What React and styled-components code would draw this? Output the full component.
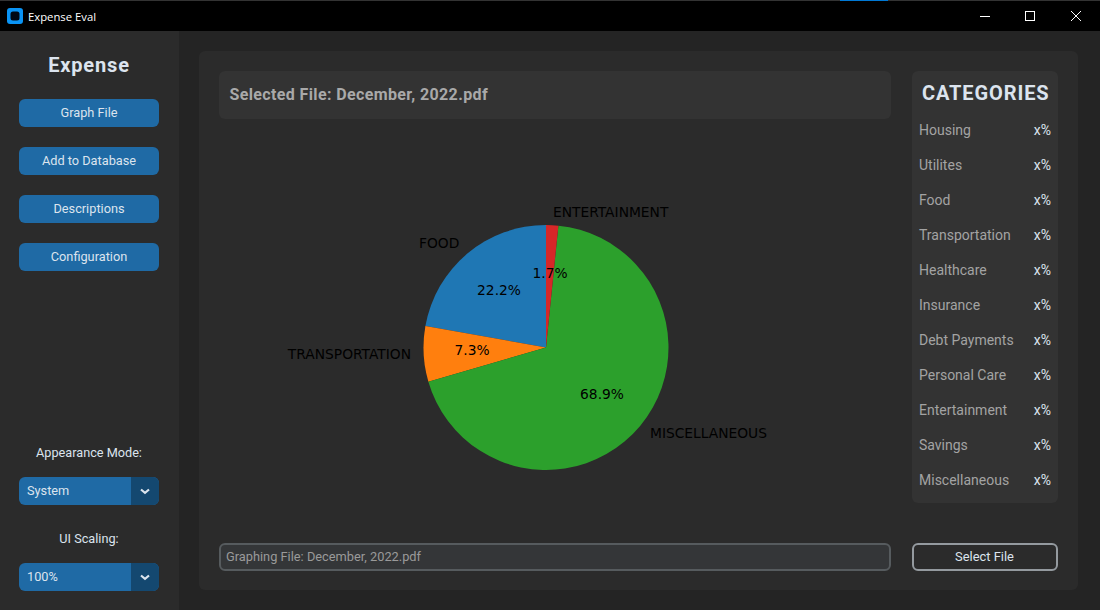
import React from 'react';
import styled, { createGlobalStyle } from 'styled-components';

const GlobalStyle = createGlobalStyle`
  html, body {
    margin: 0;
    padding: 0;
    background: #242424;
  }
  * {
    box-sizing: border-box;
  }
`;

const Window = styled.div`
  width: 1100px;
  height: 610px;
  overflow: hidden;
  display: flex;
  flex-direction: column;
  background: #242424;
  color: #dce4ee;
  font-family: Roboto, sans-serif;
`;

const TitleBar = styled.div`
  position: relative;
  height: 31px;
  flex: none;
  display: flex;
  align-items: center;
  padding: 0 1px 0 7px;
  background: #000;
  border-top: 1px solid #333;
`;

const AccentLine = styled.div`
  position: absolute;
  top: -1px;
  left: 840px;
  width: 48px;
  height: 1px;
  background: #0078d4;
`;

const AppName = styled.span`
  margin-left: 5px;
  flex: 1;
  font-family: "Open Sans", sans-serif;
  font-size: 11.3px;
  color: #fff;
`;

const Control = styled.div`
  width: ${({ $width }) => $width}px;
  height: 30px;
  display: flex;
  align-items: center;
  justify-content: center;
`;

const Body = styled.div`
  flex: 1;
  display: flex;
  min-height: 0;
`;

const Sidebar = styled.aside`
  width: 179px;
  flex: none;
  display: flex;
  flex-direction: column;
  align-items: center;
  padding: 21px 1px 0 0;
  background: #2b2b2b;
`;

const Brand = styled.div`
  height: 26px;
  line-height: 26px;
  margin-bottom: 21px;
  font-size: 20px;
  font-weight: 700;
  letter-spacing: 0.85px;
`;

const NavButtons = styled.div`
  display: flex;
  flex-direction: column;
  gap: 20px;
  flex: 1;
`;

const NavButton = styled.button`
  width: 140px;
  height: 28px;
  padding: 0 0 2px;
  border: 0;
  border-radius: 6px;
  background: #1f6aa5;
  color: #dce4ee;
  font-family: Roboto, sans-serif;
  font-size: 12.75px;
`;

const OptionLabel = styled.div`
  height: 28px;
  line-height: 28px;
  margin-bottom: 10px;
  font-size: 12.7px;
`;

const Dropdown = styled.div`
  width: 140px;
  height: 28px;
  display: flex;
  overflow: hidden;
  border-radius: 6px;
  margin-bottom: ${({ $last }) => ($last ? 19 : 20)}px;
  background: #1f6aa5;
  font-size: 12.75px;
`;

const DropdownValue = styled.div`
  flex: 1;
  padding-left: 8px;
  line-height: 28px;
`;

const DropdownArrow = styled.div`
  width: 28px;
  display: flex;
  align-items: center;
  justify-content: center;
  background: #144870;
`;

const Main = styled.main`
  flex: 1;
  padding: 20px 22px 20px 20px;
`;

const Frame = styled.div`
  height: 539px;
  display: flex;
  gap: 21px;
  padding: 20px 20px 19px;
  border-radius: 6px;
  background: #2b2b2b;
`;

const LeftColumn = styled.div`
  width: 672px;
  display: flex;
  flex-direction: column;
`;

const RightColumn = styled.div`
  width: 146px;
  display: flex;
  flex-direction: column;
  justify-content: space-between;
`;

const FileHeader = styled.div`
  height: 48px;
  line-height: 47px;
  padding-left: 10.5px;
  border-radius: 6px;
  background: #333;
  color: #a9a9a9;
  font-size: 16px;
  font-weight: 700;
  letter-spacing: 0.37px;
`;

const ChartArea = styled.div`
  flex: 1;
  min-height: 0;
`;

const ChartText = styled.text`
  font-family: "DejaVu Sans", sans-serif;
  font-size: 13.8px;
  fill: #000;
`;

const StatusEntry = styled.div`
  height: 28px;
  line-height: 24px;
  padding-left: 5px;
  border: 2px solid #565b5e;
  border-radius: 6px;
  background: #343638;
  color: #9a9a9a;
  font-size: 12.8px;
`;

const Categories = styled.div`
  height: 432px;
  padding: 9px 7px 0;
  border-radius: 6px;
  background: #333;
`;

const CategoriesTitle = styled.div`
  height: 26px;
  line-height: 26px;
  margin-bottom: 6px;
  padding-left: 1.5px;
  text-align: center;
  font-size: 20px;
  font-weight: 700;
  letter-spacing: 0.9px;
`;

const CategoryRow = styled.div`
  height: 35px;
  display: flex;
  align-items: center;
  justify-content: space-between;
  font-size: 14px;
`;

const CategoryName = styled.span`
  color: #a3a3a3;
`;

const SelectButton = styled.button`
  width: 146px;
  height: 28px;
  padding: 0 1px 1px 0;
  border: 2px solid #949a9f;
  border-radius: 6px;
  background: transparent;
  color: #dce4ee;
  font-family: Roboto, sans-serif;
  font-size: 12.9px;
`;

const CATEGORIES = [
  'Housing',
  'Utilites',
  'Food',
  'Transportation',
  'Healthcare',
  'Insurance',
  'Debt Payments',
  'Personal Care',
  'Entertainment',
  'Savings',
  'Miscellaneous',
];

const CX = 546;
const CY = 347.5;
const R = 122.5;

const polar = (deg) => [
  CX + R * Math.cos((deg * Math.PI) / 180),
  CY - R * Math.sin((deg * Math.PI) / 180),
];

const SLICES = [
  { color: '#1f77b4', from: 90, to: 169.9 },
  { color: '#ff7f0e', from: 169.9, to: 196.2 },
  { color: '#2ca02c', from: 196.2, to: 444.2 },
  { color: '#d62728', from: 444.2, to: 450 },
];

const slicePath = ({ from, to }) => {
  const [x1, y1] = polar(from);
  const [x2, y2] = polar(to);
  const large = to - from > 180 ? 1 : 0;
  return `M${CX} ${CY}L${x1} ${y1}A${R} ${R} 0 ${large} 0 ${x2} ${y2}Z`;
};

const PieChart = () => (
  <svg width="672" height="424" viewBox="219 119 672 424">
    {SLICES.map((s) => (
      <path key={s.color} d={slicePath(s)} fill={s.color} />
    ))}
    <ChartText x="553" y="217">ENTERTAINMENT</ChartText>
    <ChartText x="419" y="248">FOOD</ChartText>
    <ChartText x="411" y="359" textAnchor="end">TRANSPORTATION</ChartText>
    <ChartText x="650" y="438">MISCELLANEOUS</ChartText>
    <ChartText x="550" y="278" textAnchor="middle">1.7%</ChartText>
    <ChartText x="499" y="295" textAnchor="middle">22.2%</ChartText>
    <ChartText x="472" y="355" textAnchor="middle">7.3%</ChartText>
    <ChartText x="602" y="399" textAnchor="middle">68.9%</ChartText>
  </svg>
);

const Chevron = () => (
  <svg width="10" height="7" viewBox="0 0 10 7">
    <path d="M1 1.5L5 4.8L9 1.5" fill="none" stroke="#dce4ee" strokeWidth="2.2" />
  </svg>
);

const App = () => (
  <Window>
    <GlobalStyle />
    <TitleBar>
      <AccentLine />
      <svg width="16" height="16" viewBox="0 0 16 16">
        <rect width="16" height="16" rx="3" fill="#0a94f5" />
        <rect x="3.5" y="3.5" width="9" height="9" rx="2.5" fill="#000814" />
      </svg>
      <AppName>Expense Eval</AppName>
      <Control $width={44}>
        <svg width="10" height="10" viewBox="0 0 10 10">
          <path d="M0 5.5H10" stroke="#fff" strokeWidth="1" />
        </svg>
      </Control>
      <Control $width={46}>
        <svg width="10" height="10" viewBox="0 0 10 10">
          <rect x="0.5" y="0.5" width="9" height="9" fill="none" stroke="#fff" strokeWidth="1" />
        </svg>
      </Control>
      <Control $width={46}>
        <svg width="10" height="10" viewBox="0 0 10 10">
          <path d="M0 0L10 10M10 0L0 10" stroke="#fff" strokeWidth="1" />
        </svg>
      </Control>
    </TitleBar>
    <Body>
      <Sidebar>
        <Brand>Expense</Brand>
        <NavButtons>
          <NavButton>Graph File</NavButton>
          <NavButton>Add to Database</NavButton>
          <NavButton>Descriptions</NavButton>
          <NavButton>Configuration</NavButton>
        </NavButtons>
        <OptionLabel>Appearance Mode:</OptionLabel>
        <Dropdown>
          <DropdownValue>System</DropdownValue>
          <DropdownArrow><Chevron /></DropdownArrow>
        </Dropdown>
        <OptionLabel>UI Scaling:</OptionLabel>
        <Dropdown $last>
          <DropdownValue>100%</DropdownValue>
          <DropdownArrow><Chevron /></DropdownArrow>
        </Dropdown>
      </Sidebar>
      <Main>
        <Frame>
          <LeftColumn>
            <FileHeader>Selected File: December, 2022.pdf</FileHeader>
            <ChartArea><PieChart /></ChartArea>
            <StatusEntry>Graphing File: December, 2022.pdf</StatusEntry>
          </LeftColumn>
          <RightColumn>
            <Categories>
              <CategoriesTitle>CATEGORIES</CategoriesTitle>
              {CATEGORIES.map((name) => (
                <CategoryRow key={name}>
                  <CategoryName>{name}</CategoryName>
                  <span>x%</span>
                </CategoryRow>
              ))}
            </Categories>
            <SelectButton>Select File</SelectButton>
          </RightColumn>
        </Frame>
      </Main>
    </Body>
  </Window>
);

export default App;
